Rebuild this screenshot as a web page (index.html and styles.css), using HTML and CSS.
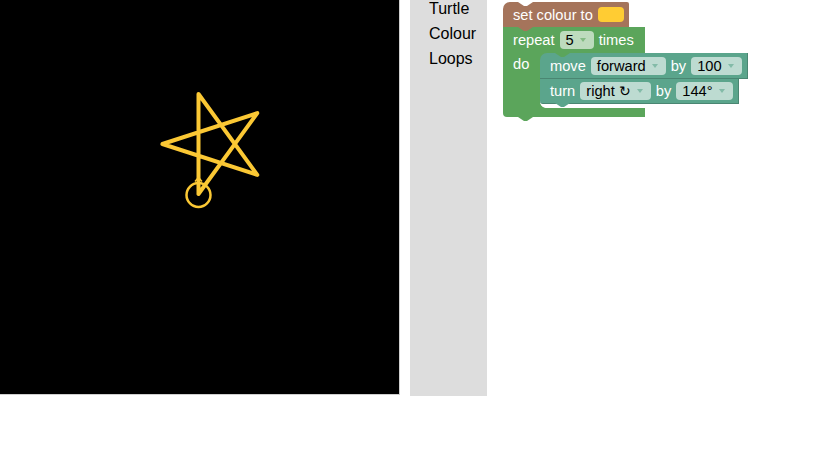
FILE: index.html
```html
<!DOCTYPE html>
<html>
<head>
<meta charset="utf-8">
<title>Turtle blocks</title>
<link rel="stylesheet" href="styles.css">
</head>
<body>
<div class="page">
  <div class="stage">
    <svg class="drawing" width="399" height="394" viewBox="0 0 399 394">
      <polyline points="198.5,194 198.5,94 257.3,174.9 162.4,144 257.3,113.1 198.5,194" fill="none" stroke="#fbc834" stroke-width="4" stroke-linecap="round" stroke-linejoin="round"/>
      <circle cx="198.5" cy="195" r="12" fill="none" stroke="#fbc834" stroke-width="2.5"/>
      <polyline points="195,181.5 198.5,177.5 202,181.5" fill="none" stroke="#fbc834" stroke-width="1.5"/>
    </svg>
  </div>
  <nav class="toolbox">
    <ul class="categories">
      <li>Turtle</li>
      <li>Colour</li>
      <li>Loops</li>
    </ul>
  </nav>
  <div class="workspace">
    <div class="stack">
      <div class="block colour-block">
        <span>set colour to</span><span class="swatch"></span>
      </div>
      <div class="block loop">
        <div class="loop-head">
          <span>repeat</span>
          <span class="field">5<i class="arrow"></i></span>
          <span>times</span>
        </div>
        <div class="loop-body">
          <div class="arm"><span>do</span></div>
          <div class="slot">
            <div class="block turtle move">
              <span>move</span>
              <span class="field">forward<i class="arrow"></i></span>
              <span>by</span>
              <span class="field">100<i class="arrow"></i></span>
            </div>
            <div class="block turtle turn">
              <span>turn</span>
              <span class="field">right <span class="rot">↻</span><i class="arrow"></i></span>
              <span>by</span>
              <span class="field">144°<i class="arrow"></i></span>
            </div>
            <div class="slot-end"></div>
          </div>
        </div>
        <div class="loop-foot"></div>
      </div>
    </div>
  </div>
</div>
</body>
</html>
```
FILE: styles.css
```css
html, body {
  margin: 0;
  padding: 0;
  background: #fff;
}

.page {
  display: flex;
  align-items: flex-start;
  font-family: "Liberation Sans", Arial, sans-serif;
}

.stage {
  width: 399px;
  height: 394px;
  background: #000;
  border-right: 1px solid #cfcfcf;
  border-bottom: 1px solid #cfcfcf;
  flex: none;
}

.drawing {
  display: block;
}

.toolbox {
  margin-left: 10px;
  width: 77px;
  height: 396px;
  background: #dddddd;
  flex: none;
  box-sizing: border-box;
  padding-left: 19px;
  overflow: hidden;
}

.categories {
  list-style: none;
  margin: -4px 0 0 0;
  padding: 0;
  font-size: 16px;
  line-height: 25px;
  color: #000;
}

.workspace {
  flex: 1;
  height: 396px;
  position: relative;
}

.stack {
  position: absolute;
  left: 16px;
  top: 2px;
  font-size: 14.67px;
  color: #fff;
  display: flex;
  flex-direction: column;
  align-items: flex-start;
}

.block {
  position: relative;
  box-sizing: border-box;
}

.colour-block {
  display: flex;
  align-items: center;
  gap: 5px;
  height: 25px;
  padding: 0 5px 0 10px;
  background: #a5745b;
  border-radius: 7px 2px 0 0;
}

.colour-block::before,
.colour-block::after,
.move::before,
.turn::after,
.loop-foot::after {
  content: "";
  position: absolute;
  left: 15px;
  width: 15px;
  height: 4px;
  clip-path: polygon(0 0, 15px 0, 9px 4px, 6px 4px);
}

.colour-block::before {
  top: 0;
  background: #fff;
}

.colour-block::after {
  top: 100%;
  background: #a5745b;
  z-index: 1;
}

.swatch {
  width: 26px;
  height: 15px;
  background: #ffcc33;
  border-radius: 4px;
}

.loop {
  display: flex;
  flex-direction: column;
  align-items: flex-start;
}

.loop-head {
  width: 142px;
  height: 26px;
  box-sizing: border-box;
  display: flex;
  align-items: center;
  gap: 5px;
  padding-left: 10px;
  background: #5ba55b;
}

.field {
  display: inline-flex;
  align-items: center;
  height: 18px;
  padding: 0 8px 0 6px;
  border-radius: 4px;
  background: #bddbbd;
  color: #000;
  white-space: nowrap;
}

.turtle .field {
  background: #bddbd1;
}

.rot {
  margin-left: 4px;
  font-size: 13.5px;
}

.arrow {
  display: inline-block;
  margin-left: 6px;
  width: 0;
  height: 0;
  border-left: 3.5px solid transparent;
  border-right: 3.5px solid transparent;
  border-top: 4px solid rgba(91, 165, 91, 0.6);
}

.turtle .arrow {
  border-top-color: rgba(91, 165, 140, 0.6);
}

.loop-body {
  display: flex;
  background: linear-gradient(#5ba55b, #5ba55b) no-repeat 0 0 / 60px 10px;
}

.arm {
  position: relative;
  width: 37px;
  box-sizing: border-box;
  padding: 2px 0 0 10px;
  line-height: 18px;
  background: #5ba55b;
}

.arm::after {
  content: "";
  position: absolute;
  left: 100%;
  bottom: 0;
  width: 6px;
  height: 6px;
  background: radial-gradient(circle at 100% 0, transparent 5.5px, #5ba55b 6.2px);
}

.slot {
  display: flex;
  flex-direction: column;
  align-items: flex-start;
}

.turtle {
  display: flex;
  align-items: center;
  gap: 5px;
  padding: 0 5px 0 10px;
  background: #5ba58c;
  border-right: 1px solid #4a8672;
  border-bottom: 1px solid #4a8672;
}

.move {
  height: 26px;
  border-radius: 7px 0 0 0;
}

.move::before {
  top: 0;
  background: #5ba55b;
}

.turn {
  height: 25px;
  border-radius: 0 0 0 3px;
}

.turn::after {
  top: 100%;
  background: #5ba58c;
}

.slot-end {
  height: 4px;
}

.loop-foot {
  position: relative;
  width: 142px;
  height: 9px;
  background: #5ba55b;
  border-radius: 0 0 0 4px;
}

.loop-foot::after {
  top: 100%;
  background: #5ba55b;
}
```
